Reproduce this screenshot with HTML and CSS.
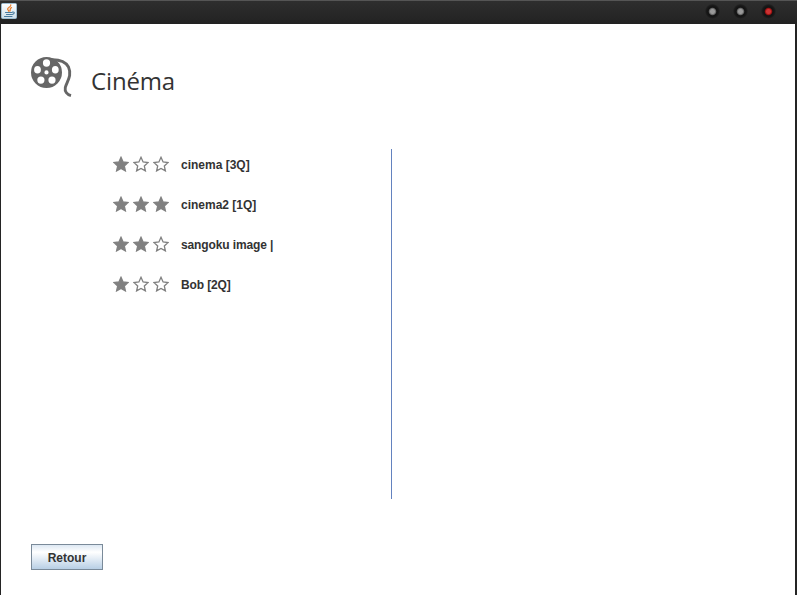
FILE: index.html
```html
<!DOCTYPE html>
<html lang="fr">
<head>
<meta charset="utf-8">
<title>Cinéma</title>
<link rel="stylesheet" href="styles.css">
</head>
<body>
<svg class="defs" aria-hidden="true">
  <symbol id="star" viewBox="0 0 16 16"><path d="M8 1.300l2.100 4.700 5 .5-3.800 3.400 1.100 5L8 12.400l-4.400 2.500 1.100-5L.9 6.500l5-.5z"/></symbol>
</svg>
<div class="window">
  <header class="titlebar">
    <svg class="java" viewBox="0 0 16 16">
      <defs><linearGradient id="jb" x2="0" y2="1"><stop stop-color="#fff"/><stop offset="1" stop-color="#ccdeea"/></linearGradient></defs>
      <rect x=".5" y=".5" width="15" height="15" rx="1" fill="url(#jb)" stroke="#9dbdd2"/>
      <g fill="none" stroke-linecap="round">
        <path d="M9.800 2C10.200 4 6.600 4.400 6.600 6c0 1 1.200 1.300 1.200 2.300M10.500 4.600C8.300 5.500 9.700 6.300 9 8" stroke="#e98232" stroke-width="1.300"/>
        <path d="M4.500 9.500h6.500M5.500 11.500h5M3.500 13.500h7.500M11.500 9c2.500-.4 2.200 2-.3 2.500" stroke="#477b9e" stroke-width="1.100"/>
      </g>
    </svg>
    <div class="controls"><i class="dot"></i><i class="dot"></i><i class="dot close"></i></div>
  </header>
  <main class="content">
    <div class="heading">
      <svg class="reel" viewBox="0 0 42 42">
        <path fill="#666" fill-rule="evenodd" d="M15.500 1a15.500 15.500 0 1 0 0 31a15.500 15.500 0 1 0 0-31zM15.500 3.300a3.600 3.700 0 1 1 0 7.400a3.600 3.700 0 1 1 0-7.400zM6.500 10a3.400 3.800 0 1 1 0 7.600a3.400 3.800 0 1 1 0-7.600zM24.300 10a3.400 3.800 0 1 1 0 7.600a3.400 3.800 0 1 1 0-7.600zM9.900 20.500a3.600 3.600 0 1 1 0 7.200a3.600 3.600 0 1 1 0-7.200zM21 20.500a3.600 3.600 0 1 1 0 7.200a3.600 3.600 0 1 1 0-7.200zM15.500 14.300a2.100 2.100 0 1 1 0 4.200a2.100 2.100 0 1 1 0-4.200z"/>
        <path fill="none" stroke="#666" stroke-width="2.900" d="M20 3.800C29 3.500 34.500 5.500 37.500 11C41.500 20 35.500 26 34.300 31.500C33.500 35.500 36 38.500 40 39.600"/>
      </svg>
      <h1>Cinéma</h1>
    </div>
    <div class="columns">
      <ul class="list">
        <li><span class="stars"><svg class="on"><use href="#star"/></svg><svg><use href="#star"/></svg><svg><use href="#star"/></svg></span><span class="name">cinema [3Q]</span></li>
        <li><span class="stars"><svg class="on"><use href="#star"/></svg><svg class="on"><use href="#star"/></svg><svg class="on"><use href="#star"/></svg></span><span class="name">cinema2 [1Q]</span></li>
        <li><span class="stars"><svg class="on"><use href="#star"/></svg><svg class="on"><use href="#star"/></svg><svg><use href="#star"/></svg></span><span class="name long">sangoku image |</span></li>
        <li><span class="stars"><svg class="on"><use href="#star"/></svg><svg><use href="#star"/></svg><svg><use href="#star"/></svg></span><span class="name long">Bob [2Q]</span></li>
      </ul>
      <div class="detail"></div>
    </div>
    <button class="back">Retour</button>
  </main>
</div>
</body>
</html>
```
FILE: styles.css
```css
* { box-sizing: border-box; }
body { margin: 0; overflow: hidden; background: #fff; }
.defs { display: none; }
.window { height: 595px; border: solid #242424; border-width: 0 2px 0 1px; }
.titlebar {
  height: 24px;
  margin: 0 -2px 0 -1px;
  padding: 3px 21px 0 1px;
  display: flex;
  justify-content: space-between;
  border-top: 1px solid #555;
  background: linear-gradient(#2e2e2e, #222);
}
.java { width: 16px; height: 16px; margin-top: -1px; }
.controls { display: flex; gap: 13px; }
.dot {
  width: 15px;
  height: 15px;
  border-radius: 50%;
  background: radial-gradient(circle, #999 0 2px, #666 3.200px, #141414 4.200px 5px, #191919 6px, #262626 7.500px);
}
.dot.close { background: radial-gradient(circle, #c33 0 2px, #911 3.200px, #141414 4.200px 5px, #191919 6px, #262626 7.500px); }
.content { padding: 32px 0 0 30px; }
.heading { display: flex; height: 93px; }
.reel { width: 42px; height: 42px; }
h1 {
  margin: 9px 0 0 18px;
  font: 400 24px/32px "Open Sans", sans-serif;
  letter-spacing: -.15px;
  color: #333;
}
.columns { display: grid; grid-template-columns: 360px 1fr; height: 350px; }
.list { margin: 0; padding: 0 0 0 82px; list-style: none; }
.list li { display: flex; height: 40px; padding-top: 7px; }
.stars { display: flex; gap: 4px; width: 68px; }
.stars svg {
  width: 16px;
  height: 16px;
  fill: #fff;
  stroke: #808080;
  stroke-width: 1.300;
}
.stars .on { fill: #808080; }
.name {
  margin-top: 1px;
  font: bold 12px/16px "Liberation Sans", sans-serif;
  color: #333;
  white-space: nowrap;
}
.long { letter-spacing: -.12px; }
.detail { border-left: 1px solid #6382bf; }
.back {
  display: block;
  width: 72px;
  height: 26px;
  margin-top: 45px;
  padding: 2px 0 0;
  border: 1px solid #7a8a99;
  background: linear-gradient(#dde8f3, #fff 30%, #b8cfe5);
  font: bold 12px/22px "Liberation Sans", sans-serif;
  color: #333;
}
```
